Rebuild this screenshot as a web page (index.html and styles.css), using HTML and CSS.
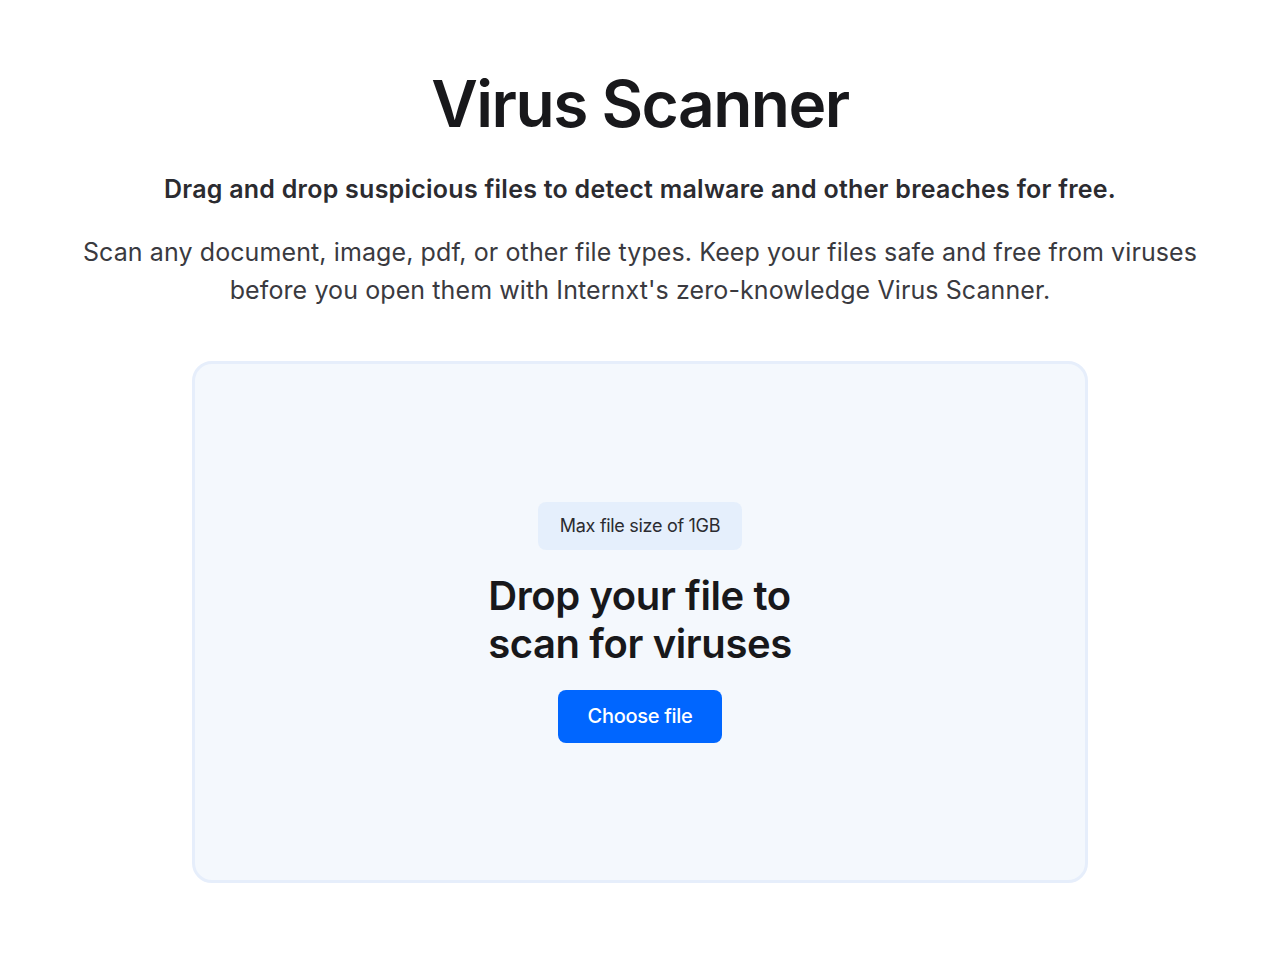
FILE: index.html
```html
<!DOCTYPE html>
<html lang="en">
<head>
    <meta charset="UTF-8">
    <meta name="viewport" content="width=device-width, initial-scale=1.0">
    <title>Virus Scanner</title>
    <link rel="stylesheet" href="styles.css">
</head>
<body>

    <section class="hero">
        <h1 class="title">Virus Scanner</h1>
        <p class="lead">Drag and drop suspicious files to detect malware and other breaches for free.</p>
        <p class="desc">Scan any document, image, pdf, or other file types. Keep your files safe and free from viruses<br>before you open them with Internxt's zero-knowledge Virus Scanner.</p>
    </section>

    <div class="dropzone">
        <span class="badge">Max file size of 1GB</span>
        <h2 class="drop-title">Drop your file to<br>scan for viruses</h2>
        <button class="choose-btn">Choose file</button>
    </div>

</body>
</html>
```

FILE: styles.css
```css
body {
    margin: 0;
    background-color: #ffffff;
    font-family: Inter, "Noto Sans", sans-serif;
    color: #18181b;
}

.hero {
    display: flex;
    flex-direction: column;
    align-items: center;
    text-align: center;
    padding-top: 66px;
}

.title {
    margin: 0;
    font-size: 64px;
    font-weight: 600;
    line-height: 76px;
    letter-spacing: -1.5px;
    color: #18181b;
}

.lead {
    margin: 31px 0 0;
    font-size: 25px;
    font-weight: 600;
    line-height: 32px;
    letter-spacing: 0.25px;
    color: #2b2b30;
}

.desc {
    margin: 28px 0 0;
    font-size: 25px;
    font-weight: 400;
    line-height: 38px;
    letter-spacing: 0.1px;
    color: #3a3a3f;
}

.dropzone {
    box-sizing: border-box;
    width: 896px;
    height: 522px;
    margin: 52px auto 0;
    display: flex;
    flex-direction: column;
    align-items: center;
    justify-content: center;
    background-color: #f4f8fd;
    border: 3px solid #e6eefb;
    border-radius: 20px;
}

.badge {
    padding: 12px 22px;
    background-color: #e5effc;
    border-radius: 8px;
    font-size: 18px;
    line-height: 24px;
    letter-spacing: -0.3px;
    color: #2b2b30;
}

.drop-title {
    margin: 22px 0 0;
    font-size: 40px;
    font-weight: 600;
    line-height: 48px;
    letter-spacing: -0.4px;
    color: #18181b;
}

.choose-btn {
    margin-top: 22px;
    padding: 0 30px;
    height: 53px;
    border: none;
    border-radius: 8px;
    background-color: #0066ff;
    color: #ffffff;
    font-family: Inter, "Noto Sans", sans-serif;
    font-size: 20px;
    font-weight: 500;
    letter-spacing: -0.3px;
    cursor: pointer;
}
```
